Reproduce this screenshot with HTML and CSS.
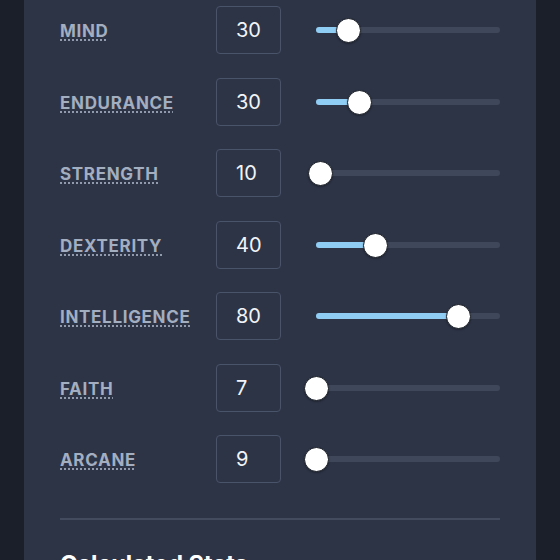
FILE: index.html
```html
<!DOCTYPE html>
<html lang="en">
<head>
<meta charset="UTF-8">
<meta name="viewport" content="width=device-width, initial-scale=1.0">
<title>Stat Planner</title>
<link rel="stylesheet" href="styles.css">
</head>
<body>
<div class="panel">
    <div class="stats">
        <div class="stat-row">
            <abbr class="stat-label" title="Mind">MIND</abbr>
            <div class="stat-input">30</div>
            <div class="slider">
                <div class="track"><div class="fill" style="width: 17.9%"></div></div>
                <div class="thumb" style="left: 17.9%"></div>
            </div>
        </div>
        <div class="stat-row">
            <abbr class="stat-label" title="Endurance">ENDURANCE</abbr>
            <div class="stat-input">30</div>
            <div class="slider">
                <div class="track"><div class="fill" style="width: 23.4%"></div></div>
                <div class="thumb" style="left: 23.4%"></div>
            </div>
        </div>
        <div class="stat-row">
            <abbr class="stat-label" title="Strength">STRENGTH</abbr>
            <div class="stat-input">10</div>
            <div class="slider">
                <div class="track"><div class="fill" style="width: 2.2%"></div></div>
                <div class="thumb" style="left: 2.2%"></div>
            </div>
        </div>
        <div class="stat-row">
            <abbr class="stat-label" title="Dexterity">DEXTERITY</abbr>
            <div class="stat-input">40</div>
            <div class="slider">
                <div class="track"><div class="fill" style="width: 32.6%"></div></div>
                <div class="thumb" style="left: 32.6%"></div>
            </div>
        </div>
        <div class="stat-row">
            <abbr class="stat-label" title="Intelligence">INTELLIGENCE</abbr>
            <div class="stat-input">80</div>
            <div class="slider">
                <div class="track"><div class="fill" style="width: 77.4%"></div></div>
                <div class="thumb" style="left: 77.4%"></div>
            </div>
        </div>
        <div class="stat-row">
            <abbr class="stat-label" title="Faith">FAITH</abbr>
            <div class="stat-input">7</div>
            <div class="slider">
                <div class="track"><div class="fill" style="width: 0%"></div></div>
                <div class="thumb" style="left: 0%"></div>
            </div>
        </div>
        <div class="stat-row">
            <abbr class="stat-label" title="Arcane">ARCANE</abbr>
            <div class="stat-input">9</div>
            <div class="slider">
                <div class="track"><div class="fill" style="width: 0%"></div></div>
                <div class="thumb" style="left: 0%"></div>
            </div>
        </div>
    </div>

    <hr class="divider">

    <h2 class="section-title">Calculated Stats</h2>
</div>
</body>
</html>
```

FILE: styles.css
```css
body {
    margin: 0;
    height: 560px;
    overflow: hidden;
    background-color: #1a1f29;
    font-family: Inter, "Liberation Sans", sans-serif;
}

.panel {
    margin: 0 24px;
    padding: 6px 36px 40px;
    background-color: #2d3446;
    min-height: 600px;
}

.stats {
    display: flex;
    flex-direction: column;
    gap: 23.5px;
}

.stat-row {
    display: grid;
    grid-template-columns: 156px 65px 1fr;
    align-items: center;
    height: 48px;
}

.stat-label {
    justify-self: start;
    margin-top: 2px;
    color: #a3aec0;
    font-size: 17px;
    font-weight: 700;
    letter-spacing: 0.04em;
    text-decoration: underline dotted;
    text-underline-offset: 3px;
    cursor: help;
}

.stat-input {
    box-sizing: border-box;
    height: 48px;
    padding-left: 19px;
    display: flex;
    align-items: center;
    border: 1px solid #49536a;
    border-radius: 4px;
    color: #f2f4f8;
    font-size: 20px;
}

.slider {
    position: relative;
    height: 24px;
    margin-left: 35px;
    display: flex;
    align-items: center;
}

.track {
    width: 100%;
    height: 6px;
    border-radius: 3px;
    background-color: #3f485b;
    overflow: hidden;
}

.fill {
    height: 100%;
    background-color: #90cdf4;
}

.thumb {
    position: absolute;
    top: 0;
    width: 25px;
    height: 25px;
    margin-left: -12.5px;
    box-sizing: border-box;
    border-radius: 50%;
    background-color: #ffffff;
    border: 1.5px solid #161b24;
    box-shadow: 0 1px 2px rgba(0, 0, 0, 0.3);
}

.divider {
    margin: 35px 0 30px;
    border: 0;
    border-top: 2px solid #434c5e;
}

.section-title {
    margin: 0;
    color: #ffffff;
    font-size: 23.5px;
    font-weight: 700;
    line-height: 1.2;
}
```
